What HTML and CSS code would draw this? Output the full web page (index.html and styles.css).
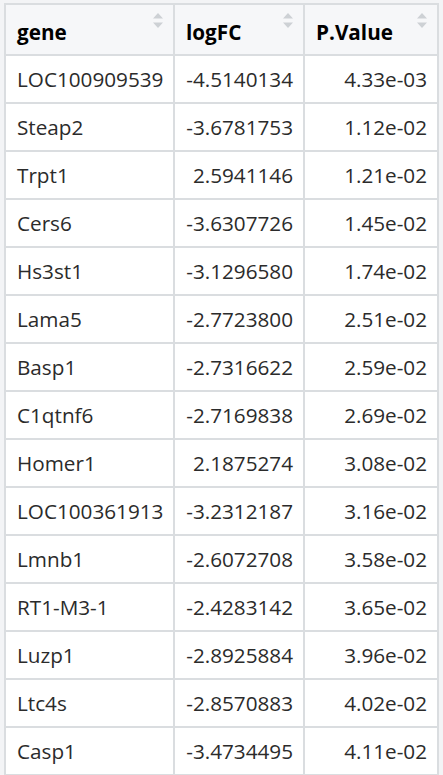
FILE: index.html
```html
<!DOCTYPE html>
<html>
<head>
<meta charset="utf-8">
<link rel="stylesheet" href="styles.css">
</head>
<body>
<div class="frame">
<table class="dt">
  <colgroup><col class="c1"><col class="c2"><col class="c3"></colgroup>
  <thead>
    <tr>
      <th class="left">gene<span class="sort"><svg width="10" height="16" viewBox="0 0 10 16"><path d="M5 0 L10 5.5 L0 5.5 Z M0 9.5 L10 9.5 L5 15 Z" fill="#cdd1d5"/></svg></span></th>
      <th class="left">logFC<span class="sort"><svg width="10" height="16" viewBox="0 0 10 16"><path d="M5 0 L10 5.5 L0 5.5 Z M0 9.5 L10 9.5 L5 15 Z" fill="#cdd1d5"/></svg></span></th>
      <th class="left">P.Value<span class="sort"><svg width="10" height="16" viewBox="0 0 10 16"><path d="M5 0 L10 5.5 L0 5.5 Z M0 9.5 L10 9.5 L5 15 Z" fill="#cdd1d5"/></svg></span></th>
    </tr>
  </thead>
  <tbody>
    <tr><td>LOC100909539</td><td class="num">-4.5140134</td><td class="num">4.33e-03</td></tr>
    <tr><td>Steap2</td><td class="num">-3.6781753</td><td class="num">1.12e-02</td></tr>
    <tr><td>Trpt1</td><td class="num">2.5941146</td><td class="num">1.21e-02</td></tr>
    <tr><td>Cers6</td><td class="num">-3.6307726</td><td class="num">1.45e-02</td></tr>
    <tr><td>Hs3st1</td><td class="num">-3.1296580</td><td class="num">1.74e-02</td></tr>
    <tr><td>Lama5</td><td class="num">-2.7723800</td><td class="num">2.51e-02</td></tr>
    <tr><td>Basp1</td><td class="num">-2.7316622</td><td class="num">2.59e-02</td></tr>
    <tr><td>C1qtnf6</td><td class="num">-2.7169838</td><td class="num">2.69e-02</td></tr>
    <tr><td>Homer1</td><td class="num">2.1875274</td><td class="num">3.08e-02</td></tr>
    <tr><td>LOC100361913</td><td class="num">-3.2312187</td><td class="num">3.16e-02</td></tr>
    <tr><td>Lmnb1</td><td class="num">-2.6072708</td><td class="num">3.58e-02</td></tr>
    <tr><td>RT1-M3-1</td><td class="num">-2.4283142</td><td class="num">3.65e-02</td></tr>
    <tr><td>Luzp1</td><td class="num">-2.8925884</td><td class="num">3.96e-02</td></tr>
    <tr><td>Ltc4s</td><td class="num">-2.8570883</td><td class="num">4.02e-02</td></tr>
    <tr><td>Casp1</td><td class="num">-3.4734495</td><td class="num">4.11e-02</td></tr>
  </tbody>
</table>
</div>
</body>
</html>
```
FILE: styles.css
```css
html, body {
  margin: 0;
  padding: 0;
  background: #f3f4f6;
}
.frame {
  padding: 3px 0 0 4px;
}
.dt {
  border-collapse: separate;
  border-spacing: 0;
  table-layout: fixed;
  width: 435px;
  background: #ffffff;
  border-top: 2px solid #dadde0;
  border-left: 2px solid #dadde0;
  font-family: "Open Sans", "Noto Sans", sans-serif;
  font-size: 20.7px;
  color: #2b2b2b;
}
.c1 { width: 169px; }
.c2 { width: 130px; }
.c3 { width: 134px; }
.dt th, .dt td {
  border-right: 2px solid #dadde0;
  border-bottom: 2px solid #dadde0;
  padding: 0 10px 0 11px;
  white-space: nowrap;
  overflow: hidden;
}
.dt th {
  position: relative;
  height: 51px;
  background: #f6f7f9;
  font-weight: 700;
  color: #000000;
  text-align: left;
  padding-top: 4px;
  box-sizing: border-box;
}
.dt td {
  height: 48px;
  box-sizing: border-box;
}
.dt td.num {
  text-align: right;
}
.sort {
  position: absolute;
  right: 10px;
  top: 8px;
  width: 10px;
  height: 16px;
  line-height: 0;
}
```
